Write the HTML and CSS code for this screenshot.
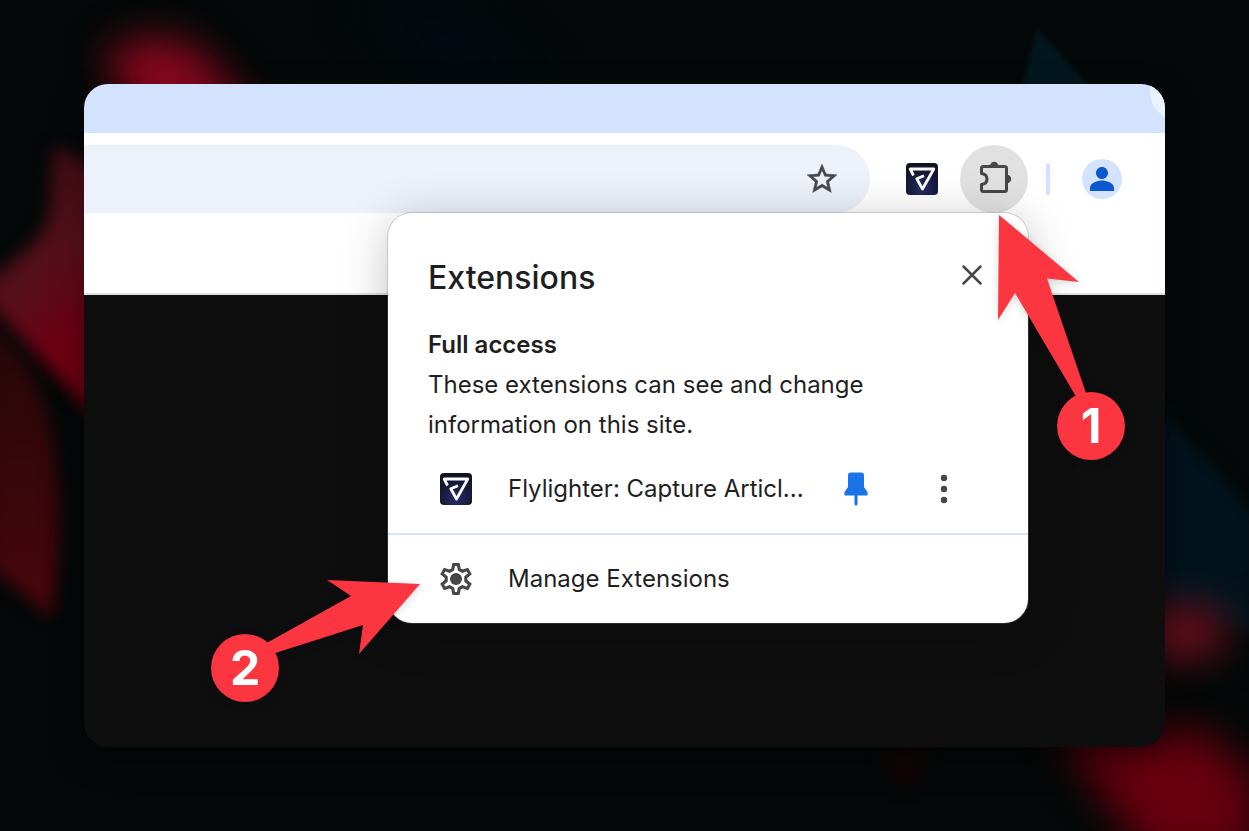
FILE: index.html
```html
<!DOCTYPE html>
<html lang="en">
<head>
<meta charset="utf-8">
<meta name="viewport" content="width=device-width, initial-scale=1">
<title>Manage extensions</title>
<link rel="stylesheet" href="styles.css">
</head>
<body class="stage">
<svg class="backdrop" viewBox="0 0 1249 831" preserveAspectRatio="none" aria-hidden="true">
  <defs>
    <filter id="soft" x="-50%" y="-50%" width="200%" height="200%" color-interpolation-filters="sRGB"><feGaussianBlur stdDeviation="8"/></filter>
    <filter id="haze" x="-60%" y="-60%" width="220%" height="220%" color-interpolation-filters="sRGB"><feGaussianBlur stdDeviation="20"/></filter>
    <filter id="edge" x="-30%" y="-30%" width="160%" height="160%" color-interpolation-filters="sRGB"><feGaussianBlur stdDeviation="2"/></filter>
    <linearGradient id="red" x1="0" y1="0" x2="0.4" y2="1"><stop offset="0" stop-color="#300a10"/><stop offset=".55" stop-color="#56101b"/><stop offset=".8" stop-color="#6c0012"/></linearGradient>
    <linearGradient id="ember" x1="0" y1="0" x2="0" y2="1"><stop offset="0" stop-color="#230709"/><stop offset="1" stop-color="#4a060c"/></linearGradient>
  </defs>
  <path d="M350 0h110l90 84H430z" fill="#020910" filter="url(#haze)"/>
  <path d="M105 55Q155 25 200 52L260 125H140z" fill="#8c081d" filter="url(#haze)"/>
  <path d="M54 145L110 175V433L0 316L-20 290L20 254Q54 232 50 190Z" fill="url(#red)" filter="url(#soft)"/>
  <path d="M-12 320Q28 350 48 415Q68 500 52 618L-12 565Z" fill="url(#ember)" filter="url(#soft)"/>
  <path d="M1037 28L1095 92H1020z" fill="#02161d" filter="url(#edge)"/>
  <path d="M1160 408L1255 515V635L1160 600z" fill="#02131c" filter="url(#soft)"/>
  <ellipse cx="1180" cy="632" rx="48" ry="28" fill="#69101f" filter="url(#haze)"/>
  <path d="M1060 735L1200 730L1255 775V860H1150z" fill="#66000d" filter="url(#haze)"/>
  <ellipse cx="905" cy="762" rx="22" ry="25" fill="#100506" filter="url(#soft)"/>
</svg>
<main class="window">
  <div class="tabstrip"><span class="tab-button"></span></div>
  <div class="toolbar">
    <div class="omnibox">
      <input class="address" type="text" aria-label="Address">
      <button class="star" type="button" aria-label="Bookmark this page">
        <svg width="36" height="36" viewBox="0 0 24 24"><path fill="#474747" stroke="#474747" stroke-width=".3" d="M22 9.24l-7.19-.62L12 2 9.19 8.63 2 9.24l5.46 4.73L5.82 21 12 17.27 18.18 21l-1.63-7.03L22 9.24zM12 15.4l-3.76 2.27 1-4.28-3.32-2.88 4.38-.38L12 6.1l1.71 4.04 4.38.38-3.32 2.88 1 4.28L12 15.4z"/></svg>
      </button>
    </div>
    <button class="tool" type="button" aria-label="Flylighter">
      <svg width="32" height="32" viewBox="0 0 32 32"><use href="#flylighter"/></svg>
    </button>
    <button class="tool tool-active" type="button" aria-label="Extensions">
      <svg width="36" height="36" viewBox="0 0 36 36"><path d="M5.500 7.500Q5.500 5.500 7.500 5.500H28.500Q30.500 5.500 30.500 7.500V28.500Q30.500 30.500 28.500 30.500H7.500Q5.500 30.500 5.500 28.500V23.500C9 23 11 21 11 18S9 13 5.500 12.500Z" fill="none" stroke="#474747" stroke-width="3" stroke-linejoin="round"/><path d="M14 5A4.200 4.200 0 0 1 22.400 5ZM31 13.800A4.200 4.200 0 0 1 31 22.200Z" fill="#474747"/></svg>
    </button>
    <span class="separator"></span>
    <button class="avatar" type="button" aria-label="Profile">
      <svg width="36" height="36" viewBox="0 0 24 24"><path fill="#0b57d0" d="M12 12c2.210 0 4-1.790 4-4s-1.790-4-4-4-4 1.790-4 4 1.790 4 4 4zm0 1c-2.670 0-8 1.500-8 5v2h16v-2c0-3.500-5.330-5-8-5z"/></svg>
    </button>
  </div>
  <div class="bookmarks"></div>

  <section class="popup" aria-labelledby="popup-title">
    <header class="popup-head">
      <h1 class="title" id="popup-title">Extensions</h1>
      <button class="close" type="button" aria-label="Close">
        <svg width="20" height="20" viewBox="0 0 20 20"><path d="M1.500 1.500l17 17M18.500 1.500l-17 17" stroke="#474747" stroke-width="2.500" stroke-linecap="round"/></svg>
      </button>
    </header>
    <div class="access">
      <h2 class="subtitle">Full access</h2>
      <p class="note">These extensions can see and change information on this site.</p>
    </div>
    <div class="row">
      <span class="row-icon">
        <svg width="32" height="32" viewBox="0 0 32 32">
          <defs>
            <radialGradient id="night" cx=".5" cy=".8" r=".8"><stop offset="0" stop-color="#252c66"/><stop offset=".6" stop-color="#161a3a"/><stop offset="1" stop-color="#11131d"/></radialGradient>
            <g id="flylighter">
              <rect width="32" height="32" rx="4" fill="url(#night)"/>
              <path d="M7.500 12.500L4.200 6H27.800L16.500 26L10.800 15.800L18 12.800" fill="none" stroke="#fff" stroke-width="2.800" stroke-linejoin="round" stroke-linecap="butt"/>
            </g>
          </defs>
          <use href="#flylighter"/>
        </svg>
      </span>
      <span class="row-label">Flylighter: Capture Articl...</span>
      <button class="pin" type="button" aria-label="Unpin">
        <svg width="24" height="34" viewBox="0 0 24 34"><path fill="#1a73e8" d="M7 0.500H17Q20 0.500 20 3.500V15L23.500 20V23.500H13.500V32Q13.500 33.500 12 33.500T10.500 32V23.500H.5V20L4 15V3.500Q4 .5 7 .5Z"/></svg>
      </button>
      <button class="more" type="button" aria-label="More options">
        <svg width="8" height="30" viewBox="0 0 8 30" fill="#474747"><circle cx="4" cy="4" r="3.200"/><circle cx="4" cy="15" r="3.200"/><circle cx="4" cy="26" r="3.200"/></svg>
      </button>
    </div>
    <button class="row row-manage" type="button">
      <span class="row-icon">
        <svg width="32" height="34" viewBox="-16 -17 32 34"><path d="M-2.300 -14.500H2.300L3.300 -9.500L6.300 -7.800L11.400 -9.400L13.800 -5.200L9.800 -1.800V1.800L13.800 5.200L11.400 9.400L6.300 7.800L3.300 9.500L2.300 14.500H-2.300L-3.300 9.500L-6.300 7.800L-11.400 9.400L-13.800 5.200L-9.800 1.800V-1.800L-13.800 -5.200L-11.400 -9.400L-6.300 -7.800L-3.300 -9.500Z" fill="none" stroke="#474747" stroke-width="3.100" stroke-linejoin="miter"/><circle r="6" fill="#474747"/></svg>
      </span>
      <span class="row-label">Manage Extensions</span>
    </button>

    <div class="callout callout-one">
      <svg class="arrow" width="127" height="245" viewBox="0 0 127 245" aria-hidden="true"><path fill="#fb3640" d="M1 0L81 67L49 63.500L92 190L83 190L17 78L0 105Z"/></svg>
      <span class="badge">1</span>
    </div>
    <div class="callout callout-two">
      <svg class="arrow" width="210" height="123" viewBox="0 0 210 123" aria-hidden="true"><path fill="#fb3640" d="M209 5L116 1L140 17L52 66L58 76L152 46L148 75Z"/></svg>
      <span class="badge">2</span>
    </div>
  </section>
</main>
</body>
</html>
```

FILE: styles.css
```css
* { box-sizing: border-box; }

button,
input {
  margin: 0;
  padding: 0;
  border: 0;
  background: none;
  color: inherit;
  font: inherit;
}

svg { display: block; }

.stage {
  position: relative;
  display: flex;
  min-height: 100vh;
  margin: 0;
  padding: 84px;
  background: #040808;
  color: #1f1f1f;
  font: 24px/40px Inter, "Liberation Sans", sans-serif;
}

.backdrop {
  position: absolute;
  inset: 0;
  width: 100%;
  height: 100%;
}

.window {
  position: relative;
  flex: 1;
  min-width: 0;
  overflow: hidden;
  border-radius: 24px;
  background: #0e0e0e;
  box-shadow: 0 12px 32px rgba(0, 0, 0, 0.35);
}

.tabstrip {
  display: flex;
  justify-content: flex-end;
  height: 49px;
  overflow: hidden;
  background: #d3e2fd;
}

.tab-button {
  width: 56px;
  height: 56px;
  margin: -20px -41px 0 0;
  border-radius: 50%;
  background: #ebf2ff;
}

.toolbar {
  display: flex;
  align-items: center;
  padding: 12px 43px 0 0;
  background: #fff;
}

.omnibox {
  display: flex;
  flex: 1;
  align-items: center;
  min-width: 0;
  height: 68px;
  margin-right: 18px;
  padding-right: 30px;
  border-radius: 0 34px 34px 0;
  background: #ecf1fa;
}

.address {
  flex: 1;
  min-width: 0;
  height: 68px;
  padding: 0 24px;
}

.tool {
  display: grid;
  place-items: center;
  width: 68px;
  height: 68px;
  border-radius: 50%;
}

.tool-active {
  margin-left: 4px;
  background: #e1e1e1;
}

.separator {
  width: 4px;
  height: 32px;
  margin: 0 32px 0 18px;
  border-radius: 2px;
  background: #d3e3fd;
}

.avatar {
  display: grid;
  place-items: center;
  width: 40px;
  height: 40px;
  border-radius: 50%;
  background: #d3e3fd;
}

.bookmarks {
  height: 82px;
  border-bottom: 2px solid #dfe0e2;
  background: #fff;
}

.popup {
  position: absolute;
  top: 129px;
  right: 137px;
  width: 640px;
  border-radius: 24px;
  background: #fff;
  box-shadow: 0 0 0 1px rgba(120, 120, 120, 0.3), 0 8px 48px rgba(0, 0, 0, 0.24);
}

.popup-head {
  display: flex;
  align-items: flex-start;
  justify-content: space-between;
  padding: 45px 46px 27px 40px;
}

.title {
  margin: 0;
  font-size: 32px;
  font-weight: 550;
}

.close { padding: 7px 0; }

.access { padding: 0 160px 0 40px; }

.subtitle {
  margin: 0;
  font-size: 24px;
  font-weight: 600;
}

.note { margin: 0; }

.row {
  display: flex;
  align-items: center;
  width: 100%;
  height: 88px;
  padding: 0 80px 0 52px;
  text-align: left;
}

.row-icon { margin-right: 36px; }

.row-label {
  flex: 1;
  white-space: nowrap;
}

.pin { margin-right: 72px; }

.row-manage {
  height: 90px;
  border-top: 2px solid #d3e3fd;
}

.callout {
  position: absolute;
  display: flex;
  filter: drop-shadow(0 2px 4px rgba(0, 0, 0, 0.15));
}

.callout-one {
  top: 2px;
  left: 610px;
  align-items: flex-end;
  justify-content: flex-end;
}

.callout-two {
  top: 366px;
  left: -177px;
  align-items: flex-end;
}

.badge {
  position: absolute;
  width: 68px;
  height: 68px;
  border-radius: 50%;
  background: #fb3640;
  color: #fff;
  font-size: 48px;
  font-weight: 700;
  line-height: 68px;
  text-align: center;
}
```
